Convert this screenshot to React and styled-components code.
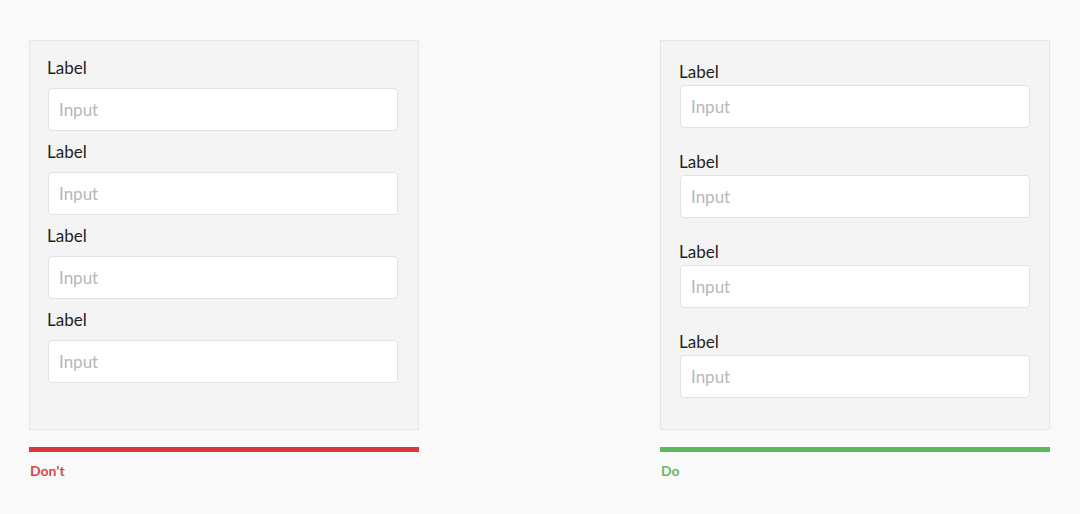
import React from "react";
import styled, { createGlobalStyle } from "styled-components";

const Global = createGlobalStyle`
  html, body { margin: 0; padding: 0; background: #f9f9f9; }
  body { font-family: Lato, "Open Sans", sans-serif; }
`;

const Page = styled.div`
  display: flex;
  gap: 241px;
  padding: 40px 0 0 29px;
  width: 1080px;
  height: 514px;
  box-sizing: border-box;
`;

const Column = styled.div`
  display: flex;
  flex-direction: column;
  width: 390px;
`;

const Panel = styled.div`
  box-sizing: border-box;
  height: 390px;
  background: #f4f4f4;
  border: 1px solid #e6e6e6;
  padding: ${(p) => p.$padTop}px 18px 0 ${(p) => p.$padLeft}px;
  display: flex;
  flex-direction: column;
  gap: ${(p) => p.$gap}px;
`;

const Field = styled.div`
  display: flex;
  flex-direction: column;
  gap: ${(p) => p.$gap}px;
`;

const Label = styled.label`
  font-size: 17px;
  line-height: 20px;
  color: #1f1f1f;
  height: 20px;
`;

const Input = styled.input`
  box-sizing: border-box;
  margin-left: 1px;
  width: 350px;
  height: 43px;
  border: 1px solid #e2e2e2;
  border-radius: 4px;
  background: #fff;
  padding: 0 10px;
  font-family: Lato, sans-serif;
  font-size: 17px;
  color: #333;
  outline: none;
  &::placeholder { color: #b8b8b8; }
`;

const Bar = styled.div`
  margin-top: 17px;
  height: 5px;
  background: ${(p) => p.$color};
`;

const Caption = styled.div`
  margin-top: 10px;
  margin-left: 1px;
  font-size: 14px;
  font-weight: 700;
  line-height: 17px;
  color: ${(p) => p.$color};
`;

const FormExample = ({ padTop, padLeft, fieldGap, labelGap, color, text, textColor }) => (
  <Column>
    <Panel $padTop={padTop} $padLeft={padLeft} $gap={fieldGap}>
      {[0, 1, 2, 3].map((i) => (
        <Field key={i} $gap={labelGap}>
          <Label>Label</Label>
          <Input placeholder="Input" />
        </Field>
      ))}
    </Panel>
    <Bar $color={color} />
    <Caption $color={textColor}>{text}</Caption>
  </Column>
);

export default function App() {
  return (
    <>
      <Global />
      <Page>
        <FormExample padTop={17} padLeft={17} fieldGap={11} labelGap={10} color="#d9363e" textColor="#d34848" text="Don’t" />
        <FormExample padTop={21} padLeft={18} fieldGap={24} labelGap={3} color="#5cb85c" textColor="#63bb63" text="Do" />
      </Page>
    </>
  );
}
